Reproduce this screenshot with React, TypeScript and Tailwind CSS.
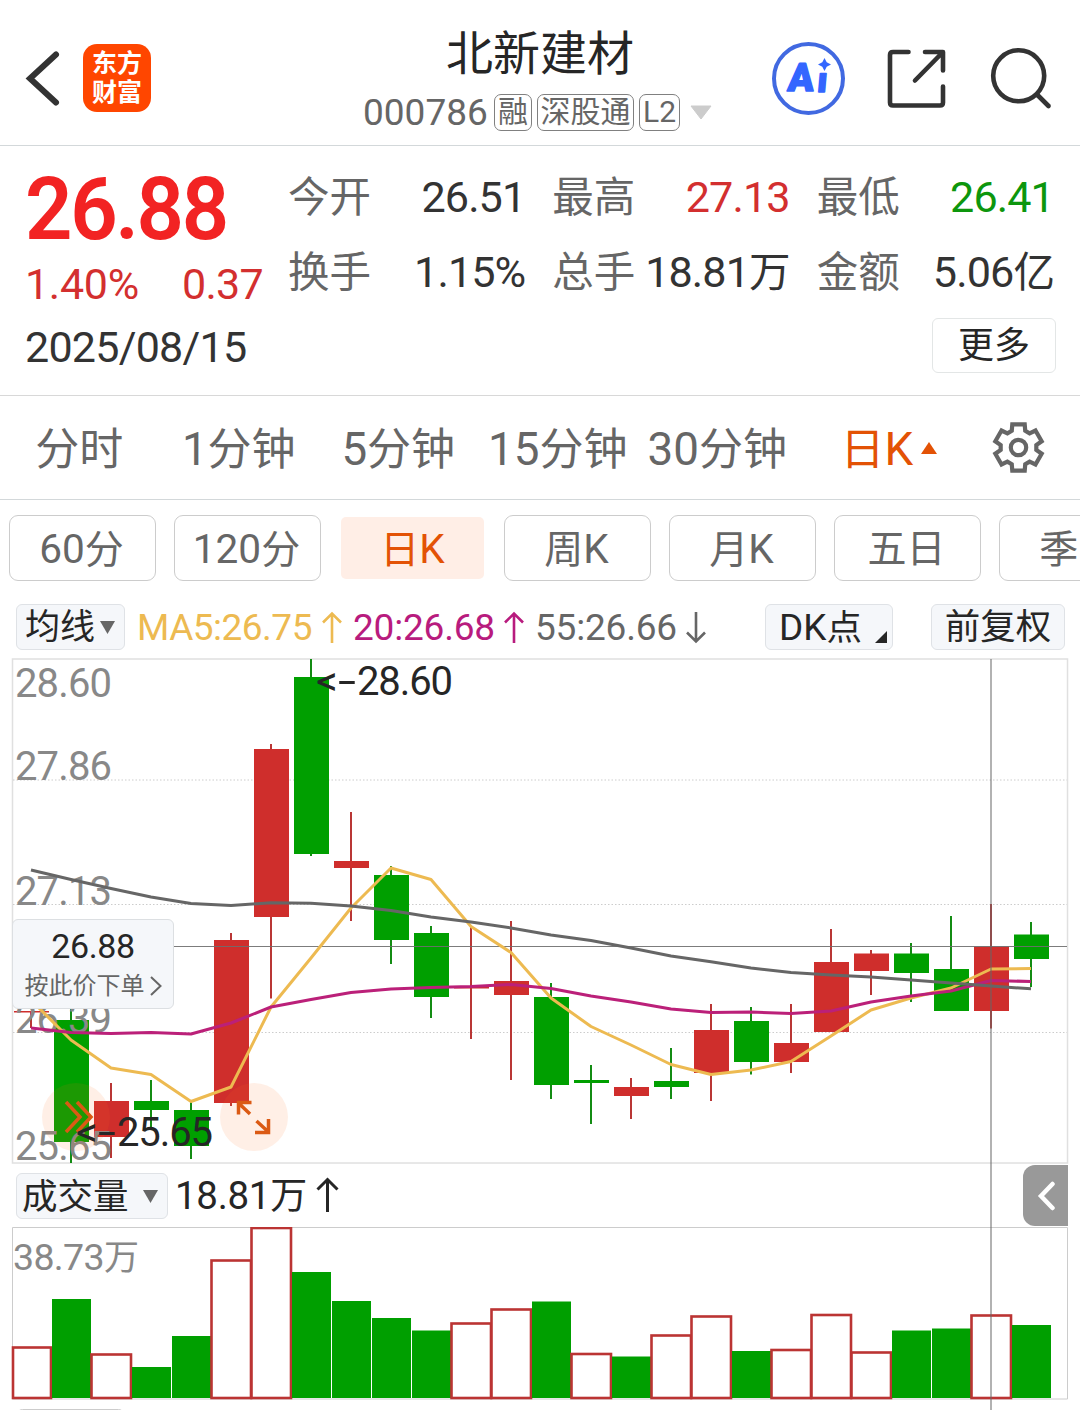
import React from "react";

const FONT = "font-['Roboto','Noto_Sans_CJK_SC',sans-serif]";
const RED = "#cf2e2c";
const GREEN = "#009f00";

/** Splits a string so that Latin runs are set slightly larger than the Chinese ones. */
function Mixed({ text }: { text: string }) {
  const parts = text.match(/[\x00-\x7f]+|[^\x00-\x7f]+/g) ?? [];
  return (
    <>
      {parts.map((p, i) =>
        p.charCodeAt(0) < 128 ? (
          <span key={i} className="text-[1.04em]">
            {p}
          </span>
        ) : (
          <span key={i}>{p}</span>
        ),
      )}
    </>
  );
}

function Header() {
  return (
    <header className="flex h-[146px] shrink-0 items-start border-b border-[#d3d8da]">
      <div className="flex w-[340px] items-center gap-[20px] pl-[24px] pt-[44px]">
        <svg width="39" height="68" viewBox="24 44 39 68" fill="none">
          <path d="M56 54.500L30 78.500L56 102.500" stroke="#333" strokeWidth="6" strokeLinecap="round" />
        </svg>
        <div className="flex h-[68px] w-[68px] flex-col items-center justify-center rounded-[14px] bg-[#ff4600] text-[25px] font-bold leading-[29px] text-white">
          <span>东方</span>
          <span>财富</span>
        </div>
      </div>
      <div className="flex w-[400px] flex-col items-center pt-[24px]">
        <h1 className="text-[47px] leading-[60px] text-[#262626]">北新建材</h1>
        <div className="-mt-[1px] flex h-[58px] w-[400px] items-center pl-[23px] text-[#666]">
          <span className="w-[131px] text-[37px] leading-[37px]">000786</span>
          <Badge className="w-[38px]">融</Badge>
          <Badge className="ml-[5px] w-[97px]">深股通</Badge>
          <Badge className="ml-[5px] w-[41px]">L2</Badge>
          <svg className="ml-[10px]" width="22" height="15" viewBox="0 0 22 15">
            <path d="M1 1H21L11 14Z" fill="#ccc" stroke="#ccc" strokeLinejoin="round" />
          </svg>
        </div>
      </div>
      <div className="flex flex-1 items-center pl-[32px] pt-[42px]">
        <div className="relative h-[73px] w-[73px] rounded-full border-[4.500px] border-[#4169e1]">
          <svg className="absolute left-[-4px] top-[-4px]" width="73" height="73" viewBox="772 42 73 73">
            <g
              transform="translate(787 90.500) skewX(-5)"
              fontFamily="Roboto"
              fontWeight="900"
              fill="#3366ff"
              stroke="#3366ff"
              strokeLinejoin="round"
            >
              <text fontSize="39" strokeWidth="1.500" textLength="26" lengthAdjust="spacingAndGlyphs">
                A
              </text>
              <text x="29.500" y="1" fontSize="35" strokeWidth="1.500">
                ı
              </text>
            </g>
            <path
              d="M824.500 58L826.700 62.300L831 64.500L826.700 66.700L824.500 71L822.300 66.700L818 64.500L822.300 62.300Z"
              fill="#3366ff"
            />
          </svg>
        </div>
        <svg className="ml-[40px]" width="64" height="64" viewBox="885 47 64 64" fill="none">
          <g stroke="#333" strokeWidth="4.600" strokeLinecap="round" strokeLinejoin="round">
            <path d="M908.500 52H893Q890 52 890 55V102.500Q890 105.500 893 105.500H940Q943 105.500 943 102.500V86.500" />
            <path d="M925 52H943V70.500M942 53L915 80.500" />
          </g>
        </svg>
        <svg className="ml-[39px]" width="66" height="66" viewBox="988 45.500 66 66" fill="none">
          <g stroke="#333" strokeWidth="4.600" strokeLinecap="round">
            <circle cx="1018.700" cy="75.300" r="25.500" />
            <path d="M1038 95L1048.500 105.500" />
          </g>
        </svg>
      </div>
    </header>
  );
}

function Badge({ className, children }: { className: string; children: React.ReactNode }) {
  return (
    <span
      className={`flex h-[37px] shrink-0 items-center justify-center whitespace-nowrap rounded-[7px] border border-[#808080] text-[30px] leading-[36px] ${className}`}
    >
      {children}
    </span>
  );
}

const QUOTES = [
  { label: "今开", value: "26.51", tone: "text-[#333]" },
  { label: "最高", value: "27.13", tone: "text-[#d32f2f]" },
  { label: "最低", value: "26.41", tone: "text-[#0d960d]" },
  { label: "换手", value: "1.15%", tone: "text-[#333]" },
  { label: "总手", value: "18.81万", tone: "text-[#333]" },
  { label: "金额", value: "5.06亿", tone: "text-[#333]" },
];

function Quote() {
  return (
    <section className="flex h-[250px] shrink-0 border-b border-[#d8d8d8]">
      <div className="w-[289px] pl-[25px] pt-[21px]">
        <div className="w-[212px] origin-left scale-x-[0.945] text-[88px] font-semibold leading-[84px] tracking-[-2.500px] text-[#f22323]">
          26.88
        </div>
        <div className="flex h-[67px] justify-between pr-[26px] text-[43px] leading-[67px] text-[#d32f2f]">
          <span className="tracking-[-0.300px]">1.40%</span>
          <span className="tracking-[-0.700px]">0.37</span>
        </div>
        <div className="text-[43px] leading-[59px] tracking-[-0.750px] text-[#333]">2025/08/15</div>
      </div>
      <div className="-ml-[1px] flex flex-1 flex-col pr-[24px] pt-[14px]">
        <div className="grid grid-cols-3 gap-x-[27px] pr-[2px]">
          {QUOTES.map((q) => (
            <div key={q.label} className="flex h-[75px] justify-between whitespace-nowrap text-[41.500px] leading-[75px]">
              <span className="text-[#666]">{q.label}</span>
              <span className={`tracking-[-0.900px] ${q.tone}`}>
                <Mixed text={q.value} />
              </span>
            </div>
          ))}
        </div>
        <button className="mt-[8px] h-[55px] w-[124px] self-end rounded-[6px] border border-[#e3e6e6] text-[36px] leading-[52px] text-[#262626]">
          更多
        </button>
      </div>
    </section>
  );
}

function gearPath() {
  const pts: string[] = [];
  for (let i = 0; i < 6; i++) {
    const a = -90 + i * 60;
    const steps: [number, number][] = [
      [-22, 18],
      [-15, 24],
      [15, 24],
      [22, 18],
    ];
    for (const [d, r] of steps) {
      const t = ((a + d) * Math.PI) / 180;
      pts.push(`${(r * Math.cos(t)).toFixed(2)} ${(r * Math.sin(t)).toFixed(2)}`);
    }
  }
  return `M${pts.join("L")}Z`;
}

function Tabs() {
  return (
    <nav className="flex h-[104px] shrink-0 items-center border-b border-[#d3d8da] text-[44px] leading-[60px] text-[#666]">
      {["分时", "1分钟", "5分钟", "15分钟", "30分钟"].map((t) => (
        <span key={t} className="w-[159.500px] whitespace-nowrap pr-[1px] pt-[4px] text-center">
          <Mixed text={t} />
        </span>
      ))}
      <span className="ml-[43px] flex w-[149px] items-center whitespace-nowrap text-[#e35205]">
        <span className="pt-[4px]">
          <Mixed text="日K" />
        </span>
        <svg className="ml-[8px]" width="16" height="12" viewBox="0 0 16 12">
          <path d="M8 0L16 12H0Z" fill="#e35205" />
        </svg>
      </span>
      <svg width="56" height="56" viewBox="-28.500 -27.500 56 56" fill="none" stroke="#666" strokeWidth="4.200">
        <path d={gearPath()} />
        <circle r="7.700" />
      </svg>
    </nav>
  );
}

function Pills() {
  return (
    <div className="flex h-[96px] shrink-0 gap-[18px] overflow-hidden pl-[9px] pt-[15px] text-[39px] leading-[66px] text-[#666]">
      {["60分", "120分", "日K", "周K", "月K", "五日", "季K"].map((t) =>
        t === "日K" ? (
          <div key={t} className="w-[147px] shrink-0 px-[2px] py-[2px]">
            <div className="h-[62px] rounded-[5px] bg-[#ffeee6] text-center leading-[64px] text-[#e35205]">
              <Mixed text={t} />
            </div>
          </div>
        ) : (
          <div
            key={t}
            className="h-[66px] w-[147px] shrink-0 whitespace-nowrap rounded-[9px] border border-[#ccc] pr-[2px] text-center"
          >
            <Mixed text={t} />
          </div>
        ),
      )}
    </div>
  );
}

function Arrow({ up, color }: { up: boolean; color: string }) {
  return (
    <svg width="20" height="34" viewBox="0 0 20 34" fill="none" stroke={color} strokeWidth="2.600">
      {up ? <path d="M10 33V4M1 12.500L10 3.500L19 12.500" /> : <path d="M10 2V31M1 22.500L10 31.500L19 22.500" />}
    </svg>
  );
}

function MaRow() {
  return (
    <div className="flex h-[62px] shrink-0 items-start pl-[16px] pt-[8px] text-[35px] leading-[45px]">
      <button className="flex h-[46px] w-[109px] items-center rounded-[6px] border border-[#dfe2e6] bg-[#f5f7fa] pl-[8px] pt-[1px] text-[#262626]">
        均线
        <svg className="ml-[5px]" width="15" height="13" viewBox="0 0 15 13">
          <path d="M0 0H15L7.500 13Z" fill="#666" />
        </svg>
      </button>
      <div className="flex h-[46px] w-[640px] items-center whitespace-nowrap pl-[12px] text-[37px]">
        <span className="w-[185px] tracking-[-0.500px] text-[#edba51]">MA5:26.75</span>
        <Arrow up color="#edba51" />
        <span className="ml-[11px] w-[151px] tracking-[-0.200px] text-[#b81b7e]">20:26.68</span>
        <Arrow up color="#b81b7e" />
        <span className="ml-[11px] w-[151px] tracking-[-0.200px] text-[#666]">55:26.66</span>
        <Arrow up={false} color="#666" />
      </div>
      <button className="relative h-[46px] w-[128px] whitespace-nowrap rounded-[6px] border border-[#dfe2e6] bg-[#f5f7fa] pl-[13px] text-left text-[35.500px] text-[#262626]">
        <Mixed text="DK点" />
        <svg className="absolute bottom-[6px] right-[5px]" width="12" height="12" viewBox="0 0 12 12">
          <path d="M12 0V12H0Z" fill="#262626" />
        </svg>
      </button>
      <button className="ml-[38px] h-[46px] w-[134px] whitespace-nowrap rounded-[6px] border border-[#dfe2e6] bg-[#f5f7fa] text-center text-[35.500px] text-[#262626]">
        前复权
      </button>
    </div>
  );
}

/* up flag, body top, body bottom, wick top, wick bottom, volume bar top */
type Candle = [0 | 1, number, number, number, number, number];
const CANDLES: Candle[] = [
  [1, 1011, 1012.5, 1011, 1028, 1347.5],
  [0, 1020, 1142, 1006, 1163, 1299],
  [1, 1101, 1137, 1083, 1158, 1354.5],
  [0, 1101, 1110, 1080, 1130, 1367],
  [0, 1110, 1146, 1102, 1159, 1336],
  [1, 940, 1103, 933, 1106, 1260.5],
  [1, 749, 917, 744, 998.5, 1228],
  [0, 677, 854, 659, 856, 1272],
  [1, 861, 868, 812, 921, 1301],
  [0, 875, 940, 866, 964, 1318],
  [0, 933, 997, 926, 1018, 1330.5],
  [1, 987, 988.5, 927, 1039, 1323.5],
  [1, 981, 995, 921, 1080, 1309.5],
  [0, 997, 1085, 983, 1099, 1301.5],
  [0, 1080, 1083, 1065, 1124, 1354],
  [1, 1087, 1096, 1078, 1119, 1356.5],
  [0, 1081, 1087, 1048, 1099, 1335.5],
  [1, 1030, 1073, 1004, 1101, 1316.5],
  [0, 1021, 1062, 1007, 1074.5, 1351],
  [1, 1043, 1062, 1004, 1073, 1350],
  [1, 962, 1032, 929, 1032, 1315],
  [1, 953.5, 971, 950, 995, 1352.5],
  [0, 953.5, 973, 943, 1002, 1330.5],
  [0, 969, 1011, 916, 1011, 1328.5],
  [1, 946.5, 1011, 904, 1028.5, 1315.5],
  [0, 934.5, 959, 922, 987, 1325],
];
/* Indices of the hollow volume bars; a few differ from the candle's own direction. */
const HOLLOW = [0, 2, 5, 6, 11, 12, 14, 16, 17, 19, 20, 21, 24];

const MA5 = [
  1000, 1040, 1068, 1074.5, 1101.5, 1087, 1007, 958, 908, 868, 879.5, 926.5, 952.5, 998, 1026.5, 1045, 1064.5, 1074.5,
  1070, 1061.5, 1036, 1010, 998, 988, 969, 968.5,
];
const MA20 = [
  1028, 1032.5, 1033.5, 1032.5, 1034, 1023, 1007, 999.5, 992.5, 989, 987.5, 986.5, 984.5, 988.5, 996, 1002, 1009,
  1012.5, 1012, 1013.5, 1011, 1002, 996, 991, 980.5, 981.5,
];
const MA55 = [
  870, 879.5, 888.5, 897, 903.5, 905.5, 902.7, 903.3, 906, 910.5, 917, 922, 928, 935, 940.5, 948, 956, 961.8, 968, 972.5,
  975, 977, 980, 983, 986, 988.8,
];
const line = (ys: number[]) => ys.map((y, i) => `${31 + i * 40},${y}`).join(" ");

const AXIS: [string, number][] = [
  ["28.60", 697],
  ["27.86", 780],
  ["27.13", 905],
  ["26.39", 1032.5],
  ["25.65", 1160],
];

/** High / low marker: an arrow made of "<-" followed by the price. */
function Marker({ x, y, price }: { x: number; y: number; price: string }) {
  return (
    <text y={y}>
      <tspan x={x - 1} textLength="22" lengthAdjust="spacingAndGlyphs">
        {"<"}
      </tspan>
      <tspan x={x + 21} textLength="18" lengthAdjust="spacingAndGlyphs">
        -
      </tspan>
      <tspan x={x + 40} textLength="96">
        {price}
      </tspan>
    </text>
  );
}

function PriceChart() {
  return (
    <div className="relative h-[506px] shrink-0">
      <svg width="1080" height="506" viewBox="0 658 1080 506" className="block" fontFamily="Roboto">
        <rect x="12.500" y="659" width="1055" height="504" fill="none" stroke="#e0e0e0" strokeWidth="1.500" />
        {[780, 904.5, 1032.5].map((y) => (
          <path key={y} d={`M13 ${y}H1067`} stroke="#ccc" strokeDasharray="1.500 2" />
        ))}
        {CANDLES.map(([up, t, b, wt, wb], i) => {
          const cx = 31 + i * 40;
          const x0 = i === 0 ? 14 : cx - 17;
          return (
            <g key={i} fill={up ? RED : GREEN}>
              <rect x={cx - 1} y={wt} width="2" height={wb - wt} fill={up ? "#b93635" : "#138c13"} />
              <rect x={x0} y={t} width={cx + 18 - x0} height={b - t} />
            </g>
          );
        })}
        <path d="M173 946.500H1067" stroke="#6e6e6e" strokeOpacity="0.900" />
        <g fill="#888" fontSize="40">
          {AXIS.map(([t, y]) => (
            <text key={t} x="15" y={y} textLength="97">
              {t}
            </text>
          ))}
        </g>
        <g fill="none" strokeWidth="3" strokeLinejoin="round">
          <polyline points={line(MA5)} stroke="#edba51" />
          <polyline points={line(MA20)} stroke="#bb2079" />
          <polyline points={line(MA55)} stroke="#666" />
        </g>
        <circle cx="76" cy="1117" r="34" fill="#ff6a1a" fillOpacity="0.110" />
        <circle cx="254" cy="1117" r="34" fill="#ff6a1a" fillOpacity="0.110" />
        <g fill="none" stroke="#db5a14" strokeWidth="3.500">
          <path d="M66 1102L80 1117L66 1132M77 1102L91 1117L77 1132" />
          <path d="M250 1114L238.500 1103M238.500 1114.500V1102.500H251.500M256.500 1121L268.500 1132M268.500 1119V1132.500H255" />
        </g>
        <g fill="#262626" fontSize="40">
          <Marker x={317} y={695} price="28.60" />
          <Marker x={77} y={1146} price="25.65" />
        </g>
      </svg>
      <div className="absolute left-[12px] top-[261px] flex h-[90px] w-[162px] flex-col items-center rounded-[6px] border border-[#dcdfe2] bg-[#f5f7fa]">
        <span className="mt-[5px] text-[34px] leading-[42px] tracking-[-0.400px] text-[#262626]">26.88</span>
        <span className="mt-[1px] flex items-center text-[24px] leading-[36px] text-[#666]">
          按此价下单
          <svg className="ml-[5px]" width="12" height="20" viewBox="0 0 12 20" fill="none">
            <path d="M1 1L10.500 10L1 19" stroke="#666" strokeWidth="2" />
          </svg>
        </span>
      </div>
    </div>
  );
}

function VolumeHead() {
  return (
    <div className="flex h-[64px] shrink-0 items-start justify-between text-[35.500px] leading-[44px]">
      <div className="flex pl-[16px] pt-[9px]">
        <button className="flex h-[46px] w-[152px] items-center whitespace-nowrap rounded-[6px] border border-[#dfe2e6] bg-[#f5f7fa] pl-[5px] text-[#262626]">
          <span className="w-[121px] pt-[2px] text-left">成交量</span>
          <svg width="15" height="13" viewBox="0 0 15 13">
            <path d="M0 0H15L7.500 13Z" fill="#666" />
          </svg>
        </button>
        <span className="ml-[7px] w-[140px] whitespace-nowrap pt-[1px] text-[37px] tracking-[-0.300px] text-[#262626]">
          <Mixed text="18.81万" />
        </span>
        <svg className="mt-[4px]" width="26" height="36" viewBox="0 0 26 36" fill="none">
          <path d="M12.500 35V3M2.500 12.500L12.500 2.500L22.500 12.500" stroke="#262626" strokeWidth="3" />
        </svg>
      </div>
      <button className="mr-[12px] mt-[1px] flex h-[61px] w-[45px] items-center justify-center rounded-l-[12px] bg-[#999]">
        <svg width="18" height="32" viewBox="0 0 18 32" fill="none">
          <path d="M15.500 4L4 16L15.500 28" stroke="#fff" strokeWidth="4.500" strokeLinecap="round" />
        </svg>
      </button>
    </div>
  );
}

function VolumeChart() {
  return (
    <svg width="1080" height="183" viewBox="0 1227 1080 183" className="-mt-[1px] block shrink-0">
      <path d="M12.500 1399V1227.500H1067.500V1399Z" fill="none" stroke="#ccc" />
      {CANDLES.map((c, i) => {
        const cx = 31 + i * 40;
        if (!HOLLOW.includes(i) && i !== 15)
          return (
            <rect
              key={i}
              x={cx - 19}
              y={c[5]}
              width="39"
              height={1398 - c[5]}
              fill={GREEN}
            />
          );
        if (i === 15) return <rect key={i} x={cx - 19} y={c[5]} width="39" height={1398 - c[5]} fill={GREEN} />;
        const x0 = i === 0 ? 13 : cx - 19.5;
        return (
          <rect
            key={i}
            x={x0}
            y={c[5]}
            width={cx + 20 - x0}
            height={1398 - c[5]}
            fill="#fff"
            stroke="#bb3433"
            strokeWidth="2.600"
          />
        );
      })}
      <text
        x="13"
        y="1270"
        fontSize="37.500"
        fill="#888"
        textLength="126"
        fontFamily="Roboto, 'Noto Sans CJK SC', sans-serif"
      >
        38.73
        <tspan fontSize="35">万</tspan>
      </text>
      <rect x="16.500" y="1409.500" width="108" height="20" rx="6" fill="#f5f7fa" stroke="#ccc" />
    </svg>
  );
}

export default function App() {
  return (
    <main className={`relative flex h-[1410px] w-[1080px] flex-col overflow-hidden bg-white ${FONT}`}>
      <Header />
      <Quote />
      <Tabs />
      <Pills />
      <MaRow />
      <PriceChart />
      <VolumeHead />
      <VolumeChart />
      <div className="absolute bottom-0 left-[990px] top-[659px] w-[2px] bg-[#666]/50" />
    </main>
  );
}
